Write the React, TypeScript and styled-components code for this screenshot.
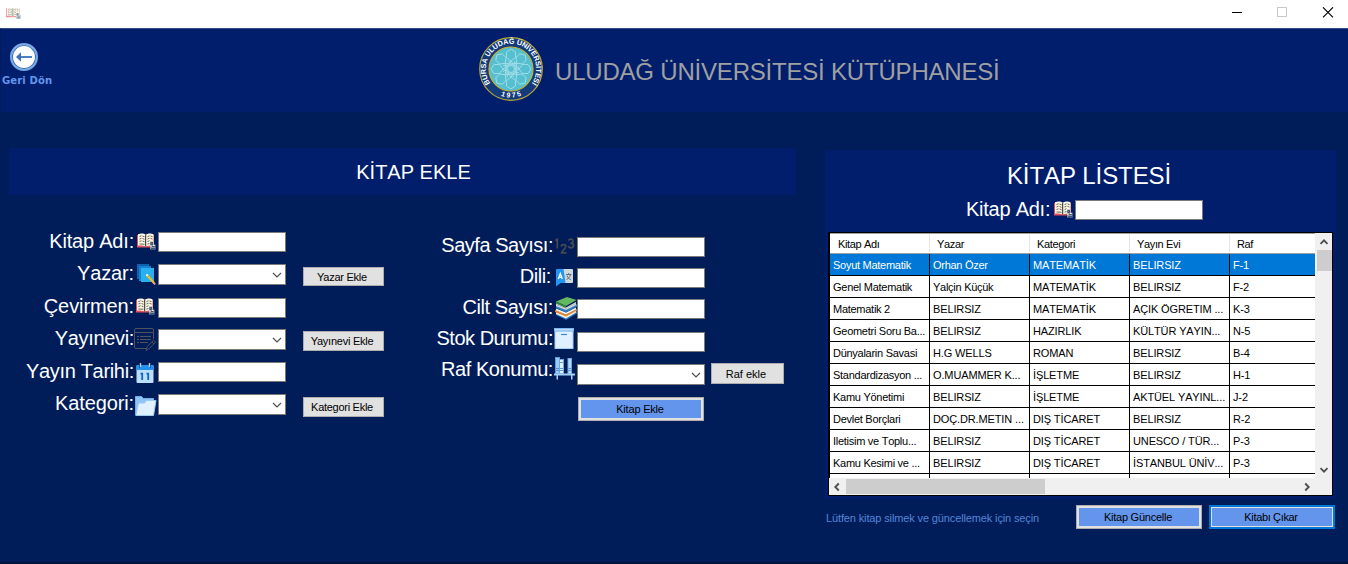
import React from "react";
import styled, { createGlobalStyle } from "styled-components";

const navy = "#001d59";
const royal = "#001e6c";
const cornflower = "#6495ed";

const GlobalStyle = createGlobalStyle`
  * { box-sizing: border-box; }
  body {
    margin: 0;
    background: ${navy};
    font-family: "Liberation Sans", Arial, sans-serif;
    font-size: 11px;
    font-kerning: none;
    overflow: hidden;
  }
  svg { display: block; }
`;

const Window = styled.div`
  width: 1348px;
  height: 564px;
  display: flex;
  flex-direction: column;
  background: ${navy};
  border-bottom: 2px solid #00143f;
`;

const TitleBar = styled.div`
  height: 28px;
  flex: none;
  background: #fff;
  display: flex;
  justify-content: space-between;
  padding: 7px 14px 0 6px;
`;

const AppIcon = styled.span`
  opacity: 0.65;
`;

const WindowControls = styled.div`
  display: flex;
  gap: 34px;
`;

const Header = styled.header`
  height: 84px;
  flex: none;
  display: flex;
  border-top: 1px solid #2f5282;
  border-left: 1px solid ${navy};
  background: ${royal};
`;

const BackButton = styled.div`
  width: 60px;
  padding: 14px 0 0 1px;
  color: ${cornflower};
  font: bold 10px/14px "DejaVu Sans", sans-serif;
  letter-spacing: 0.15px;
  white-space: nowrap;
  svg { margin: 0 0 3px 8px; }
`;

const Brand = styled.div`
  display: flex;
  margin-left: 417px;
  padding-top: 7px;
`;

const BrandTitle = styled.h1`
  margin: 22px 0 0 11px;
  font-size: 24px;
  line-height: 28px;
  font-weight: 400;
  letter-spacing: -0.2px;
  color: #a0a0a0;
  white-space: nowrap;
`;

const Body = styled.main`
  display: flex;
  align-items: flex-start;
  padding: 36px 0 0 9px;
`;

const AddSection = styled.section`
  width: 787px;
`;

const SectionTitle = styled.h2<{ $size: number; $spacing: number; $indent?: number }>`
  margin: 0;
  padding-left: ${(p) => p.$indent ?? 0}px;
  font-size: ${(p) => p.$size}px;
  line-height: 28px;
  font-weight: 400;
  letter-spacing: ${(p) => p.$spacing}px;
  color: #fff;
  text-align: center;
`;

const AddBanner = styled.div`
  height: 47px;
  padding: 10px 0 0 22px;
  background: ${royal};
`;

const FormColumns = styled.div`
  display: flex;
  align-items: flex-start;
`;

const FormColumn = styled.div<{ $top: number; $left?: number }>`
  padding-top: ${(p) => p.$top}px;
  margin-left: ${(p) => p.$left ?? 0}px;
`;

const FormRow = styled.div<{ $height: number }>`
  display: flex;
  align-items: flex-start;
  height: ${(p) => p.$height}px;
`;

const Label = styled.label<{ $width: number; $spacing?: number; $shift?: number; $top?: number }>`
  width: ${(p) => p.$width}px;
  flex: none;
  margin-top: ${(p) => p.$top ?? 1}px;
  padding-right: ${(p) => p.$shift ?? 0}px;
  font-size: 20px;
  line-height: 24px;
  letter-spacing: ${(p) => p.$spacing ?? 0}px;
  color: #fff;
  text-align: right;
  white-space: nowrap;
`;

const IconSlot = styled.span<{ $top: number; $left: number }>`
  width: 24px;
  flex: none;
  padding: ${(p) => p.$top}px 0 0 ${(p) => p.$left}px;
  svg { overflow: visible; }
`;

const TextBox = styled.div<{ $top?: number }>`
  width: 128px;
  height: 20px;
  flex: none;
  margin-top: ${(p) => p.$top ?? 0}px;
  background: #fff;
  border: 1px solid #7a7a7a;
`;

const ComboBox = styled(TextBox)`
  height: 21px;
  display: flex;
  justify-content: flex-end;
  align-items: center;
  padding-right: 3px;
`;

const Button = styled.button<{ $w: number; $h: number; $top?: number; $left?: number; $spacing?: number }>`
  width: ${(p) => p.$w}px;
  height: ${(p) => p.$h}px;
  flex: none;
  margin: ${(p) => p.$top ?? 0}px 0 0 ${(p) => p.$left ?? 0}px;
  padding: 1px 3px 0 0;
  border: 1px solid #adadad;
  background: #e1e1e1;
  color: #000;
  font: 11px/13px "Liberation Sans", Arial, sans-serif;
  letter-spacing: ${(p) => p.$spacing ?? 0}px;
  white-space: nowrap;
`;

const ActionButton = styled(Button)<{ $focused?: boolean }>`
  padding: 0 2px 0 0;
  background: ${cornflower};
  border: ${(p) => (p.$focused ? "2px solid #0078d7" : "1px solid #adadad")};
  box-shadow: inset 0 0 0 ${(p) => (p.$focused ? 1 : 2)}px #e1e1e1;
`;

const ListSection = styled.section`
  width: 511px;
  margin: 2px 0 0 29px;
`;

const ListPanel = styled.div`
  height: 349px;
  padding: 12px 3px 0 3px;
  background: ${royal};
`;

const SearchRow = styled.div`
  display: flex;
  align-items: flex-start;
  height: 42px;
  padding: 7px 0 0 138px;
`;

const Grid = styled.div`
  width: 505px;
  height: 264px;
  border: 1px solid #000;
  background: #f0f0f0;
  display: grid;
  grid-template-columns: 486px 17px;
  grid-template-rows: 245px 17px;
`;

const GridViewport = styled.div`
  overflow: hidden;
  background: #fff;
  border-left: 1px solid #000;
`;

const GridHead = styled.div`
  display: flex;
  height: 21px;
  border-top: 1px solid #a0a0a0;
  border-bottom: 1px solid #a0a0a0;
`;

const HeadCell = styled.div`
  width: 100px;
  flex: none;
  padding: 4px 0 0 7px;
  line-height: 13px;
  letter-spacing: -0.35px;
  border-right: 1px solid #e5e5e5;
  &:first-child { padding-left: 8px; }
`;

const GridRow = styled.div<{ $selected?: boolean }>`
  display: flex;
  height: 22px;
  color: ${(p) => (p.$selected ? "#fff" : "#000")};
  background: ${(p) => (p.$selected ? "#0078d7" : "#fff")};
  border-bottom: 1px solid #000;
`;

const Cell = styled.div<{ $spacing: number }>`
  width: 100px;
  flex: none;
  padding: 5px 0 0 3px;
  line-height: 13px;
  letter-spacing: ${(p) => p.$spacing}px;
  white-space: nowrap;
  overflow: hidden;
  border-right: 1px solid #000;
`;

const VerticalScroll = styled.div`
  display: flex;
  flex-direction: column;
  align-items: center;
  padding: 4px 0 3px 1px;
`;

const VerticalThumb = styled.div`
  width: 15px;
  height: 21px;
  margin: 3px 0 auto;
  background: #cdcdcd;
`;

const HorizontalScroll = styled.div`
  display: flex;
  align-items: center;
  padding: 0 3px;
`;

const HorizontalThumb = styled.div`
  width: 199px;
  height: 15px;
  margin: 0 auto 0 4px;
  background: #cdcdcd;
`;

const Footer = styled.div`
  display: flex;
  align-items: flex-start;
  padding: 6px 0 0 1px;
`;

const Hint = styled.p`
  width: 250px;
  flex: none;
  margin: 7px 0 0;
  color: #5684d8;
  line-height: 13px;
  letter-spacing: -0.13px;
  white-space: nowrap;
`;

const BookIcon = ({ w = 19, h = 17 }: { w?: number; h?: number }) => (
  <svg width={w} height={h} viewBox="0 0 19 17" preserveAspectRatio="none">
    <path d="M0 2v12.500h17V2z" fill="#e4505a" />
    <path d="M1 1.200C4 0 7 .4 8.700 1.800 11 .4 14 0 16.500 1.200V12.500c-3-.2-5 0-7.800 1-2.500-1-4.700-1.200-7.700-1z" fill="#fffbe6" />
    <path d="M8.700 2v11.500" stroke="#222" strokeWidth="1" />
    <path d="M2.500 3.500l2-.7M5.500 3l2 .8M2.500 6l2-.7M5.500 5.500l2 .8M2.500 8.500l2-.7M5.500 8l2 .8M2.500 11l5 .2M10.500 3.600l2-.8M13.500 3l2 .6M10.500 6l2-.8M13.500 5.400l2 .6M10.500 8.500l2-.8M10.500 11l2-.4" stroke="#44453e" strokeWidth=".85" fill="none" />
    <path d="M13 8.500h3v3h2.500v5H13z" fill="#8e9aa9" />
    <path d="M14 9.500h1.500v2H14zM15 13.500h2.500M14 15.500h4" stroke="#2f455e" strokeWidth=".8" fill="none" />
    <path d="M16 12.500h1.500M13 13h1.500" stroke="#fff" />
  </svg>
);

const NotesPencilIcon = () => (
  <svg width="19" height="21" viewBox="0 0 19 21">
    <path d="M0 0h12v3H3v12H0z" fill="#0b62ad" />
    <path d="M2 2h12v3H5v12H2z" fill="#1383d2" />
    <rect x="4" y="4" width="13" height="14" fill="#28b0f0" />
    <path d="M10 11l7 8" stroke="#f5bd18" strokeWidth="2.200" />
    <path d="M9.400 10.300l1 1.200" stroke="#fff" strokeWidth="2" />
    <path d="M16.600 18.600l1.500 1.700" stroke="#e99aa0" strokeWidth="2" />
  </svg>
);

const FormPencilIcon = () => (
  <svg width="22" height="24" viewBox="0 0 22 24" fill="none" stroke="#4f535b" strokeWidth="1">
    <path d="M12 20.500H2A1.500 1.500 0 0 1 .5 19V2A1.500 1.500 0 0 1 2 .5h16A1.500 1.500 0 0 1 19.500 2v9M.5 4.500h19" />
    <path d="M3 8.500h2M6 8.500h11M3 11.500h2M6 11.500h11M3 14.500h2M6 14.500h8" />
    <path d="M12 22.500l1.200-4 6.300-6.200 2 2-6.300 6.200zM18 14l2 2" />
  </svg>
);

const CalendarIcon = () => (
  <svg width="18" height="20" viewBox="0 0 18 20">
    <rect x=".5" y="2" width="17" height="18" rx="1" fill="#bbdefb" />
    <path d="M.5 7V3a1 1 0 0 1 1-1h15a1 1 0 0 1 1 1v4z" fill="#2490f0" />
    <path d="M4.500 0v4M13.500 0v4" stroke="#c3ccd6" strokeWidth="1.400" />
    <path d="M3.500 2v3M14.500 2v3" stroke="#1260b5" />
    <path d="M4.500 10.700H6.200V17M10.500 10.700h1.700V17" fill="none" stroke="#1565c0" strokeWidth="1.800" />
  </svg>
);

const FolderIcon = () => (
  <svg width="22" height="20" viewBox="0 0 22 20">
    <path d="M.5 18.500v-18h6l2 2h10v16z" fill="#8fc2f5" stroke="#70aeea" />
    <path d="M.8 19.500L3.500 7h6l2-2.500h9.500L18.500 19.500z" fill="#dff0fe" stroke="#9ccaf5" />
  </svg>
);

const NumbersIcon = () => (
  <svg width="20" height="17" viewBox="0 0 20 17" fill="none" stroke="#454952" strokeWidth="1.700">
    <path d="M.3 2.500l2-1.300V10.500" />
    <path d="M6 8.500C6.500 6 10.800 6.200 10.800 8.600c0 2-3.500 3.700-4.200 6.200h5" />
    <path d="M13.500 2.600C14.500 .4 18 .8 18 3c0 1.700-1.500 2.200-2.500 2.200 1.500 0 3 .6 3 2.400 0 2.700-4.300 3-5.200.5" />
  </svg>
);

const TranslateIcon = () => (
  <svg width="17" height="18" viewBox="0 0 17 18">
    <path d="M7 0h9a1 1 0 0 1 1 1v12a1 1 0 0 1-1 1H8z" fill="#cfd8dc" />
    <path d="M0 1a1 1 0 0 1 1-1h6.500l2 14H4.500L0 17.500z" fill="#2196f3" />
    <path d="M2.300 10L4.300 4.500l2 5.500M3 8.300h2.700" fill="none" stroke="#fff" strokeWidth="1.300" />
    <path d="M10 5.500h5.500M12.700 4v1.500M14.500 5.500c-.5 2.500-2 4-4 5M11 6.500c.5 2 2 3.500 4 4" fill="none" stroke="#607480" strokeWidth="1" />
  </svg>
);

const BookStackIcon = () => (
  <svg width="22" height="23" viewBox="0 0 22 23">
    <path d="M1 16l10 4.500L22 14v2.500L11 23 1 18z" fill="#2675b8" />
    <path d="M1 15l10 4 10-5.500v2L11 21.500 1 17z" fill="#f2efe4" />
    <path d="M0 13l11 4.500L22 12v1.500l-11 6L0 15z" fill="#e88332" />
    <path d="M1 11.500l10 4 10-5v2l-10 5-10-4z" fill="#fff5df" />
    <path d="M1 8.500l10 4.500 11-6v2.500l-11 6L1 11z" fill="#2f80c4" />
    <path d="M1 6l10 4.500L21 5v3l-10 5L1 9z" fill="#e7e8e4" />
    <path d="M1 7.500l10 4 10-5" fill="none" stroke="#98a2a2" strokeWidth=".7" />
    <path d="M1 4.500L12 0l9.500 3L11 9z" fill="#62b95f" />
    <path d="M1 4.500v2L11 11V9z" fill="#318641" />
  </svg>
);

const BoxIcon = () => (
  <svg width="20" height="21" viewBox="0 0 20 21">
    <rect x="1" y="3" width="18" height="17.500" fill="#dff0fe" stroke="#a5cff5" />
    <rect x=".5" y=".5" width="19" height="2.500" fill="#b5dafa" stroke="#80b7ed" />
    <path d="M7 6.500h6" stroke="#3f87d0" strokeWidth="1.200" />
  </svg>
);

const ShelfIcon = () => (
  <svg width="21" height="23" viewBox="0 0 21 23">
    <rect x="1.500" y=".5" width="4" height="16" fill="#9bcaf6" stroke="#5a9de0" />
    <rect x="5.500" y="2.500" width="4" height="14" fill="#dff0fe" stroke="#6aa9e6" />
    <rect x="14" y="1.500" width="3.500" height="15" fill="#b6daf9" stroke="#6aa9e6" />
    <path d="M2 11.500h3M2 13.500h3M6 5.500h3M6 11.500h3M6 13.500h3M14.500 11.500h3M14.500 13.500h3" stroke="#3e83cb" strokeWidth=".8" />
    <path d="M0 16.500h21v2H0zM2.500 18h1.500v4.500H2.500zM17 18h1.500v4.500H17z" fill="#a8d1f8" />
  </svg>
);

const Chevron = ({ dir = "down", bold = false }: { dir?: "up" | "down" | "left" | "right"; bold?: boolean }) => {
  const turn = { down: 0, left: 90, up: 180, right: 270 }[dir];
  return (
    <svg width="10" height="10" viewBox="0 0 10 10">
      <path d={bold ? "M1.500 3.200l3.500 3.500 3.500-3.500" : "M1 3l4 4 4-4"} fill="none" stroke="#505050" strokeWidth={bold ? 1.9 : 1.2} transform={`rotate(${turn} 5 5)`} />
    </svg>
  );
};

const BackIcon = () => (
  <svg width="28" height="28" viewBox="0 0 28 28">
    <circle cx="14" cy="14" r="13" fill="#fff" stroke="#78a9e4" strokeWidth="2" />
    <circle cx="14" cy="14" r="11.500" fill="none" stroke="#3c74bd" strokeWidth="1.100" />
    <path d="M9 14h13" stroke="#4b80c3" strokeWidth="2" />
    <path d="M6 14l5-4.800v9.600z" fill="#3d72b8" />
  </svg>
);

const petals = [0, 45, 90, 135, 180, 225, 270, 315];

const UniversityLogo = () => (
  <svg width="66" height="66" viewBox="-33 -33 66 66">
    <defs>
      <path id="ringTop" d="M-19.800 15.600A25.200 25.200 0 1 1 19.800 15.600" />
      <path id="ringBottom" d="M-16 23.600A28.500 28.500 0 0 0 16 23.600" />
    </defs>
    <circle r="31.300" fill="#143a7c" stroke="#b5a636" strokeWidth="1.200" />
    <circle r="22" fill="#56bfd0" stroke="#c5b52f" strokeWidth="1.200" />
    <g fill="none" stroke="#a5dfe8" strokeWidth=".9">
      {petals.map((angle) => (
        <g key={angle} transform={`rotate(${angle})`}>
          <path d="M0-8L-4.500-11.500V-17L0-20 4.500-17v5.500zM0-8L3.500-3.500M0-8L-3.500-3.500M-3-8L3-3" />
        </g>
      ))}
      <circle r="3.500" />
    </g>
    <g fill="#fff" fontFamily="Liberation Sans, Arial, sans-serif" fontWeight="700">
      <text fontSize="7.300">
        <textPath href="#ringTop" textLength="109" startOffset="1.500">BURSA ULUDAĞ ÜNİVERSİTESİ</textPath>
      </text>
      <text fontSize="7">
        <textPath href="#ringBottom" textLength="21" startOffset="6.500">1975</textPath>
      </text>
    </g>
  </svg>
);

type Field = {
  label: string;
  labelSpacing?: number;
  labelShift?: number;
  icon: React.ReactNode;
  iconTop: number;
  iconLeft: number;
  fieldTop: number;
  height: number;
  combo?: boolean;
  button?: { text: string; w: number; h: number; top: number; left: number; spacing?: number };
};

const bookFields: Field[] = [
  { label: "Kitap Adı:", labelSpacing: -0.2, icon: <BookIcon />, iconTop: 5, iconLeft: 3, fieldTop: 4, height: 32 },
  { label: "Yazar:", labelSpacing: -0.15, icon: <NotesPencilIcon />, iconTop: 4, iconLeft: 3, fieldTop: 4, height: 33, combo: true, button: { text: "Yazar Ekle", w: 81, h: 19, top: 7, left: 17, spacing: -0.25 } },
  { label: "Çevirmen:", labelSpacing: -0.1, icon: <BookIcon />, iconTop: 5, iconLeft: 2, fieldTop: 5, height: 32 },
  { label: "Yayınevi:", labelSpacing: -0.33, icon: <FormPencilIcon />, iconTop: 3, iconLeft: 0, fieldTop: 4, height: 33, combo: true, button: { text: "Yayınevi Ekle", w: 81, h: 20, top: 6, left: 17, spacing: -0.25 } },
  { label: "Yayın Tarihi:", labelSpacing: -0.33, icon: <CalendarIcon />, iconTop: 5, iconLeft: 2, fieldTop: 4, height: 32 },
  { label: "Kategori:", labelSpacing: -0.12, icon: <FolderIcon />, iconTop: 6, iconLeft: 1, fieldTop: 4, height: 32, combo: true, button: { text: "Kategori Ekle", w: 81, h: 20, top: 7, left: 17, spacing: -0.28 } },
];

const detailFields: Field[] = [
  { label: "Sayfa Sayısı:", labelSpacing: -0.47, icon: <NumbersIcon />, iconTop: 6, iconLeft: 2, fieldTop: 5, height: 31 },
  { label: "Dili:", labelSpacing: -0.4, labelShift: 2, icon: <TranslateIcon />, iconTop: 6, iconLeft: 3, fieldTop: 5, height: 31 },
  { label: "Cilt Sayısı:", labelSpacing: -0.42, icon: <BookStackIcon />, iconTop: 3, iconLeft: 2, fieldTop: 5, height: 31 },
  { label: "Stok Durumu:", labelSpacing: -0.48, icon: <BoxIcon />, iconTop: 3, iconLeft: 1, fieldTop: 7, height: 31 },
  { label: "Raf Konumu:", labelSpacing: -0.43, icon: <ShelfIcon />, iconTop: 1, iconLeft: 1, fieldTop: 8, height: 41, combo: true, button: { text: "Raf ekle", w: 73, h: 21, top: 7, left: 6 } },
];

const FieldRow = ({ field, labelWidth }: { field: Field; labelWidth: number }) => (
  <FormRow $height={field.height}>
    <Label $width={labelWidth} $spacing={field.labelSpacing} $shift={field.labelShift}>{field.label}</Label>
    <IconSlot $top={field.iconTop} $left={field.iconLeft}>{field.icon}</IconSlot>
    {field.combo ? <ComboBox $top={field.fieldTop}><Chevron /></ComboBox> : <TextBox $top={field.fieldTop} />}
    {field.button && (
      <Button $w={field.button.w} $h={field.button.h} $top={field.button.top} $left={field.button.left} $spacing={field.button.spacing}>
        {field.button.text}
      </Button>
    )}
  </FormRow>
);

const columns = ["Kitap Adı", "Yazar", "Kategori", "Yayın Evi", "Raf"];

const books = [
  ["Soyut Matematik", "Orhan Özer", "MATEMATİK", "BELIRSIZ", "F-1"],
  ["Genel Matematik", "Yalçin Küçük", "MATEMATİK", "BELIRSIZ", "F-2"],
  ["Matematik 2", "BELIRSIZ", "MATEMATİK", "AÇIK ÖGRETIM ...", "K-3"],
  ["Geometri Soru Ba...", "BELIRSIZ", "HAZIRLIK", "KÜLTÜR YAYIN...", "N-5"],
  ["Dünyalarin Savasi", "H.G WELLS", "ROMAN", "BELIRSIZ", "B-4"],
  ["Standardizasyon ...", "O.MUAMMER K...", "İŞLETME", "BELIRSIZ", "H-1"],
  ["Kamu Yönetimi", "BELIRSIZ", "İŞLETME", "AKTÜEL YAYINL...", "J-2"],
  ["Devlet Borçlari", "DOÇ.DR.METIN ...", "DIŞ TİCARET", "BELIRSIZ", "R-2"],
  ["Iletisim ve Toplu...", "BELIRSIZ", "DIŞ TİCARET", "UNESCO / TÜR...", "P-3"],
  ["Kamu Kesimi ve ...", "BELIRSIZ", "DIŞ TİCARET", "İSTANBUL ÜNİV...", "P-3"],
  ["", "", "", "", ""],
];

const cellSpacing = (text: string) => (/[a-z]/.test(text) ? -0.27 : -0.13);

export default function App() {
  return (
    <>
      <GlobalStyle />
      <Window>
        <TitleBar>
          <AppIcon><BookIcon w={15} h={12} /></AppIcon>
          <WindowControls>
            <svg width="11" height="11"><path d="M0 5.500h10" stroke="#000" /></svg>
            <svg width="11" height="11"><rect x=".5" y=".5" width="9" height="9" fill="none" stroke="#c8c8c8" /></svg>
            <svg width="12" height="11"><path d="M1 .3l10 10M11 .3l-10 10" stroke="#000" strokeWidth="1.100" /></svg>
          </WindowControls>
        </TitleBar>
        <Header>
          <BackButton><BackIcon />Geri Dön</BackButton>
          <Brand>
            <UniversityLogo />
            <BrandTitle>ULUDAĞ ÜNİVERSİTESİ KÜTÜPHANESİ</BrandTitle>
          </Brand>
        </Header>
        <Body>
          <AddSection>
            <AddBanner><SectionTitle $size={20} $spacing={0}>KİTAP EKLE</SectionTitle></AddBanner>
            <FormColumns>
              <FormColumn $top={33}>
                {bookFields.map((f) => <FieldRow key={f.label} field={f} labelWidth={125} />)}
              </FormColumn>
              <FormColumn $top={37} $left={43}>
                {detailFields.map((f) => <FieldRow key={f.label} field={f} labelWidth={126} />)}
                <ActionButton $w={126} $h={24} $left={151} $spacing={-0.2}>Kitap Ekle</ActionButton>
              </FormColumn>
            </FormColumns>
          </AddSection>
          <ListSection>
            <ListPanel>
              <SectionTitle $size={24} $spacing={-0.1} $indent={17}>KİTAP LİSTESİ</SectionTitle>
              <SearchRow>
                <Label $width={85} $spacing={-0.25} $shift={1} $top={0}>Kitap Adı:</Label>
                <IconSlot $top={4} $left={3}><BookIcon /></IconSlot>
                <TextBox $top={3} />
              </SearchRow>
              <Grid>
                <GridViewport>
                  <GridHead>{columns.map((c) => <HeadCell key={c}>{c}</HeadCell>)}</GridHead>
                  {books.map((row, i) => (
                    <GridRow key={i} $selected={i === 0}>
                      {row.map((text, j) => <Cell key={j} $spacing={cellSpacing(text)}>{text}</Cell>)}
                    </GridRow>
                  ))}
                </GridViewport>
                <VerticalScroll>
                  <Chevron dir="up" bold />
                  <VerticalThumb />
                  <Chevron bold />
                </VerticalScroll>
                <HorizontalScroll>
                  <Chevron dir="left" bold />
                  <HorizontalThumb />
                  <Chevron dir="right" bold />
                </HorizontalScroll>
              </Grid>
            </ListPanel>
            <Footer>
              <Hint>Lütfen kitap silmek ve güncellemek için seçin</Hint>
              <ActionButton $w={126} $h={24} $spacing={-0.25}>Kitap Güncelle</ActionButton>
              <ActionButton $w={126} $h={24} $left={7} $spacing={-0.35} $focused>Kitabı Çıkar</ActionButton>
            </Footer>
          </ListSection>
        </Body>
      </Window>
    </>
  );
}
